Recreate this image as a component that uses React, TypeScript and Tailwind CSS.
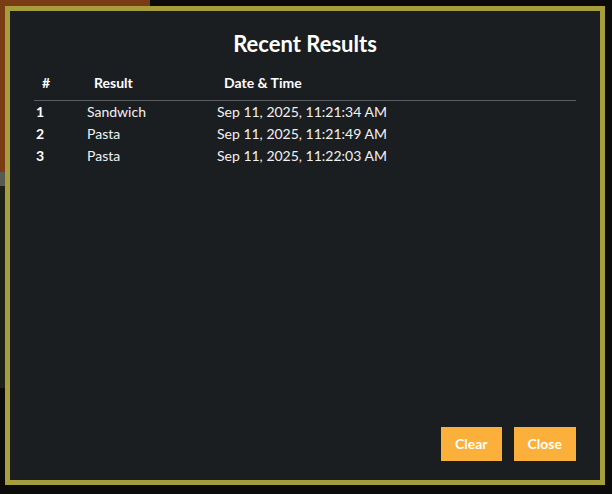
import React from 'react';

const rows = [
  { id: 1, result: 'Sandwich', time: 'Sep 11, 2025, 11:21:34 AM' },
  { id: 2, result: 'Pasta', time: 'Sep 11, 2025, 11:21:49 AM' },
  { id: 3, result: 'Pasta', time: 'Sep 11, 2025, 11:22:03 AM' },
];

export default function App() {
  return (
    <div
      className="relative w-[612px] h-[494px] overflow-hidden bg-[#0b0b0b]"
      style={{ fontFamily: 'Lato, "Open Sans", sans-serif' }}
    >
      {/* page behind the overlay */}
      <div className="flex flex-col">
        <div className="w-[150px] h-[172px] bg-[#7a3c14]" />
        <div className="w-[40px] h-[14px] bg-[#5a5a55]" />
        <div className="w-[40px] h-[202px] bg-[#1c2219]" />
      </div>

      {/* modal */}
      <div className="absolute left-[5px] top-[6px] w-[600px] h-[479px] border-[5px] border-[#a69e3d] bg-[#1b1e21] flex flex-col px-[24px] pt-[19px] pb-[19px]">
        <h2 className="text-center text-white font-bold text-[22px] leading-[28px]">Recent Results</h2>

        <div className="mt-[8px] grid grid-cols-[52px_130px_1fr] border-b border-[#5a5d60] text-white font-bold text-[14px] leading-5">
          <div className="pl-[8px] py-[7px]">#</div>
          <div className="pl-[8px] py-[7px]">Result</div>
          <div className="pl-[8px] py-[7px]">Date &amp; Time</div>
        </div>

        <div className="flex flex-col text-[14px] leading-5 text-[#f2f2f2]">
          {rows.map((r) => (
            <div key={r.id} className="grid grid-cols-[52px_130px_1fr] py-px">
              <div className="pl-[2px] font-bold text-white">{r.id}</div>
              <div className="pl-px">{r.result}</div>
              <div className="pl-px">{r.time}</div>
            </div>
          ))}
        </div>

        <div className="mt-auto flex justify-end gap-[12px]">
          <button className="bg-[#fbb03b] text-white font-bold text-[14px] leading-5 px-[14px] py-[7px]">Clear</button>
          <button className="bg-[#fbb03b] text-white font-bold text-[14px] leading-5 px-[14px] py-[7px]">Close</button>
        </div>
      </div>
    </div>
  );
}
